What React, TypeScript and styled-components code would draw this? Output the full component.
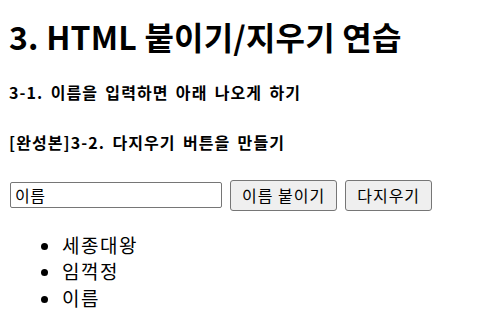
import { useState } from "react";
import styled, { createGlobalStyle } from "styled-components";

const GlobalStyle = createGlobalStyle`
  html, body {
    margin: 0;
    padding: 0;
    background: #ffffff;
  }
  body {
    font-family: "Noto Sans CJK KR", "Noto Sans", sans-serif;
    color: #000000;
  }
`;

const App = () => {
  const [name, setName] = useState("이름");
  const [names, setNames] = useState<string[]>(["세종대왕", "임꺽정", "이름"]);

  return (
    <>
      <GlobalStyle />
      <Page>
        <Title>3. HTML 붙이기/지우기 연습</Title>
        <SubTitle>3-1. 이름을 입력하면 아래 나오게 하기</SubTitle>
        <SubTitle $gap={27.5}>[완성본]3-2. 다지우기 버튼을 만들기</SubTitle>

        <FormRow>
          <NameInput value={name} onChange={(e) => setName(e.target.value)} />
          <Button onClick={() => setNames([...names, name])}>이름 붙이기</Button>
          <Button onClick={() => setNames([])}>다지우기</Button>
        </FormRow>

        <NameList>
          {names.map((n, i) => (
            <NameItem key={i}>{n}</NameItem>
          ))}
        </NameList>
      </Page>
    </>
  );
};

export default App;

const Page = styled.div`
  padding: 16px 9px 0 9px;
`;

const Title = styled.h1`
  margin: 0;
  font-size: 32px;
  font-weight: 700;
  line-height: 41px;
  letter-spacing: 0.2px;
`;

const SubTitle = styled.h4<{ $gap?: number }>`
  margin: ${(p) => p.$gap ?? 24}px 0 0 0;
  font-size: 16px;
  font-weight: 700;
  line-height: 22px;
  letter-spacing: 1.1px;
  word-spacing: 2.5px;
`;

const FormRow = styled.div`
  display: flex;
  align-items: center;
  gap: 8px;
  margin-top: 27px;
  padding-left: 1px;
`;

const NameInput = styled.input`
  box-sizing: border-box;
  width: 212px;
  height: 26px;
  padding: 1px 4px;
  border: 1px solid #767676;
  border-radius: 2px;
  font-family: inherit;
  font-size: 16px;
  letter-spacing: 0.5px;
  color: #000000;
  background: #ffffff;
`;

const Button = styled.button`
  box-sizing: border-box;
  height: 31px;
  padding: 0 11px;
  border: 1px solid #767676;
  border-radius: 3px;
  background: #efefef;
  font-family: inherit;
  font-size: 16px;
  letter-spacing: 1px;
  color: #000000;
  cursor: pointer;
`;

const NameList = styled.ul`
  margin: 21px 0 0 0;
  padding-left: 53px;
  list-style: disc;
`;

const NameItem = styled.li`
  font-size: 19px;
  line-height: 26.5px;
  letter-spacing: 1.5px;
`;
